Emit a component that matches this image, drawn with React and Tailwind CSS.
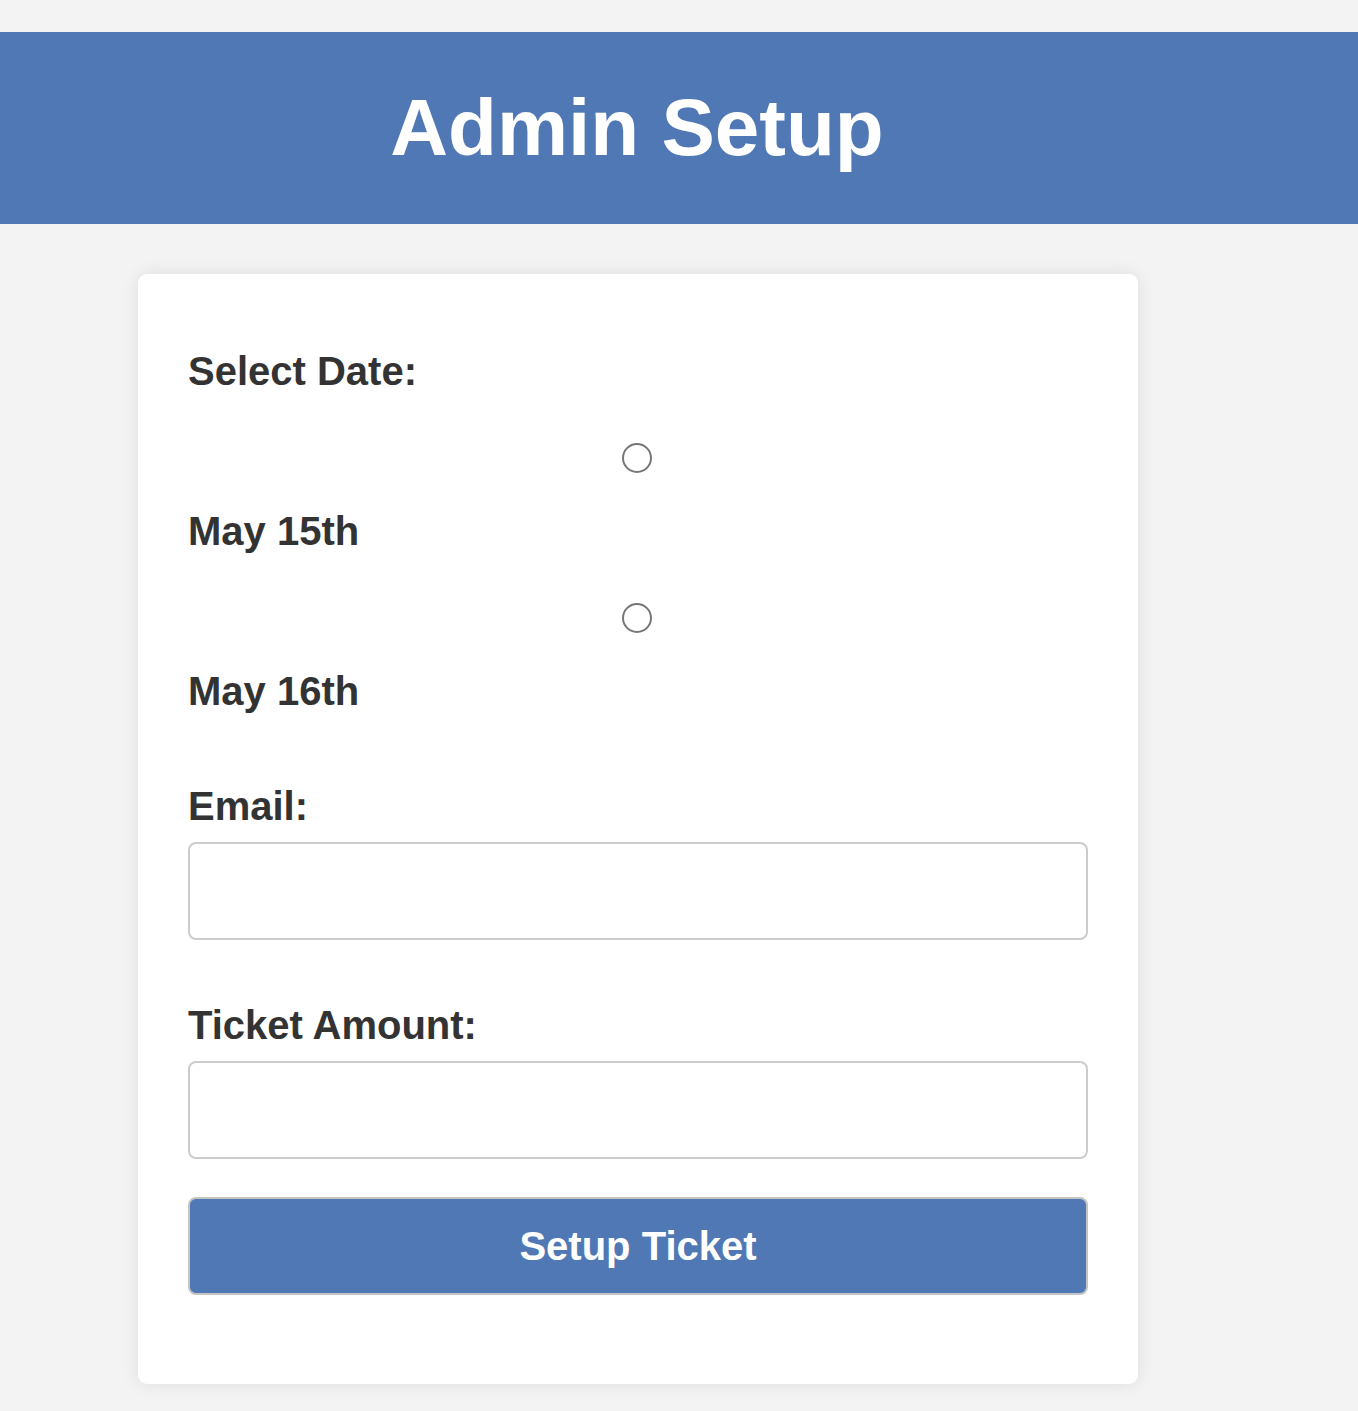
import React from "react";

function Radio() {
  return (
    <div className="flex h-[30px] justify-center pr-[2px]">
      <div className="h-[30px] w-[30px] rounded-full border-[2.5px] border-[#767676] bg-white" />
    </div>
  );
}

export default function App() {
  return (
    <div
      className="min-h-[1411px] bg-[#f3f3f3] pt-[32px]"
      style={{ fontFamily: '"Liberation Sans", Arial, sans-serif' }}
    >
      <header className="flex h-[192px] items-center bg-[#4f78b4] pr-[84px]">
        <h1 className="w-full text-center text-[80px] font-bold leading-[92px] text-white">
          Admin Setup
        </h1>
      </header>
      <div className="w-[1276px]">
        <div className="mx-auto mt-[50px] w-[1000px] rounded-[9px] bg-white px-[50px] pb-[89px] pt-[74px] text-[#333] shadow-[0_0_18px_rgba(0,0,0,0.09)]">
          <div className="text-[40px] font-bold leading-[46px]">Select Date:</div>
          <div className="mt-[49px]">
            <Radio />
          </div>
          <div className="mt-[35px] text-[40px] font-bold leading-[46px]">May 15th</div>
          <div className="mt-[49px]">
            <Radio />
          </div>
          <div className="mt-[35px] text-[40px] font-bold leading-[46px]">May 16th</div>
          <div className="mt-[69px] text-[40px] font-bold leading-[46px]">Email:</div>
          <div className="mt-[13px] h-[98px] w-[900px] rounded-[8px] border-2 border-[#cccccc] bg-white" />
          <div className="mt-[62px] text-[40px] font-bold leading-[46px]">Ticket Amount:</div>
          <div className="mt-[13px] h-[98px] w-[900px] rounded-[8px] border-2 border-[#cccccc] bg-white" />
          <button className="mt-[38px] flex h-[98px] w-[900px] items-center justify-center rounded-[8px] border-2 border-[#c4c4c4] bg-[#4f78b4] text-[40px] font-bold leading-[46px] text-white">
            Setup Ticket
          </button>
        </div>
      </div>
    </div>
  );
}
